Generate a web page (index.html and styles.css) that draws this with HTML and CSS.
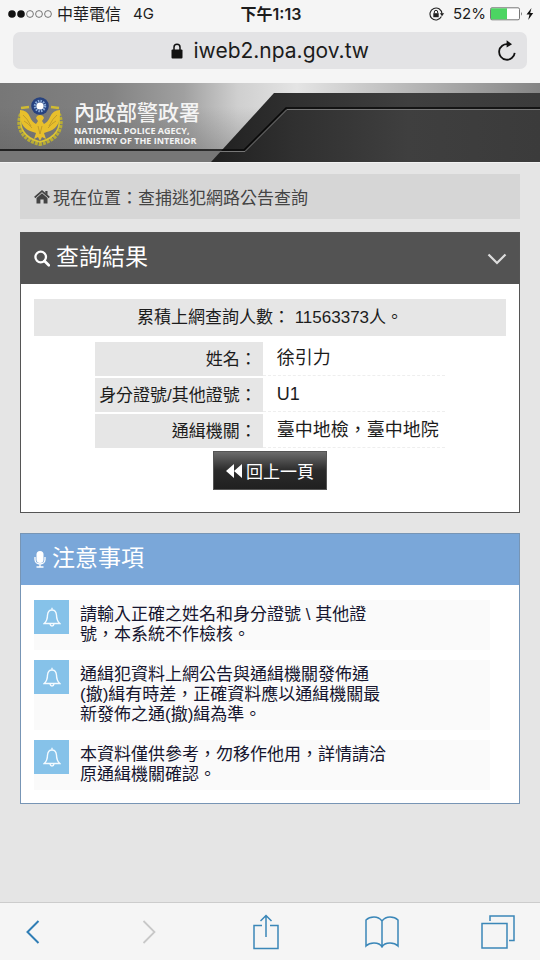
FILE: index.html
```html
<!DOCTYPE html>
<html lang="zh-Hant">
<head>
<meta charset="utf-8">
<meta name="viewport" content="width=device-width, initial-scale=1">
<title>查捕逃犯網路公告查詢</title>
<link rel="stylesheet" href="styles.css">
</head>
<body>
<div class="status">
  <div class="status-left">
    <svg width="45" height="10" viewBox="0 0 45 10" aria-hidden="true">
      <circle cx="4" cy="5" r="3.8" fill="#111"/><circle cx="13" cy="5" r="3.8" fill="#111"/>
      <g fill="none" stroke="#555" stroke-width=".8"><circle cx="22" cy="5" r="3.4"/><circle cx="31" cy="5" r="3.4"/><circle cx="40" cy="5" r="3.4"/></g>
    </svg>
    <span>中華電信</span>
    <span class="network">4G</span>
  </div>
  <div class="time">下午1:13</div>
  <div class="status-right">
    <svg width="16" height="14" viewBox="0 0 16 14" aria-hidden="true">
      <path d="M12.4 9.6A6 6 0 1 1 13 7" fill="none" stroke="#222" stroke-width="1.1"/>
      <path d="M10.8 6.3h4.4L13 9.2z" fill="#222"/>
      <rect x="4.3" y="6.2" width="5.4" height="4" fill="#222"/>
      <path d="M5.3 6.3V5a1.7 1.7 0 0 1 3.4 0v1.3" fill="none" stroke="#222"/>
    </svg>
    <span class="percent">52%</span>
    <svg width="44" height="14" viewBox="0 0 44 14" aria-hidden="true">
      <rect x=".5" y=".8" width="29" height="12" rx="1.5" fill="#fff" stroke="#777"/>
      <rect x="1" y="1.3" width="16" height="11" fill="#4cd562"/>
      <path d="M31 4.8q1.6 2 0 4z" fill="#555"/>
      <path d="M41.5 1 36.5 7.6h3L38.2 13l5-7h-3z" fill="#111"/>
    </svg>
  </div>
</div>
<div class="address-row">
  <div class="address">
    <label class="address-main" for="url">
      <svg width="12" height="16" viewBox="0 0 12 16" aria-label="安全連線">
        <rect x=".5" y="6.5" width="11" height="9" rx="1" fill="#111"/>
        <path d="M3 7V4.2a3 3 0 0 1 6 0V7" fill="none" stroke="#111" stroke-width="1.5"/>
      </svg>
      <input id="url" class="url" type="text" value="iweb2.npa.gov.tw">
    </label>
    <button class="reload" type="button" aria-label="重新載入">
      <svg width="20" height="22" viewBox="0 0 20 22">
        <path d="M11 4.2a7.8 7.8 0 1 0 6.7 8.6" fill="none" stroke="#111" stroke-width="1.8"/>
        <path d="M9.6.3 15 4.2 9.6 7.6z" fill="#111"/>
      </svg>
    </button>
  </div>
</div>

<header class="banner">
  <svg class="banner-art" viewBox="0 0 540 79" preserveAspectRatio="xMinYMin slice" aria-hidden="true">
    <defs>
      <linearGradient id="silver" x1="0" x2="1">
        <stop offset="0" stop-color="#777"/><stop offset=".2" stop-color="#828282"/>
        <stop offset=".34" stop-color="#a0a0a0"/><stop offset=".44" stop-color="#cfcfcf"/>
        <stop offset=".55" stop-color="#e4e4e4"/><stop offset="1" stop-color="#858585"/>
      </linearGradient>
      <linearGradient id="coal" x1="0" x2="1">
        <stop offset="0" stop-color="#202020"/><stop offset=".25" stop-color="#303030"/><stop offset=".6" stop-color="#3f3f3f"/><stop offset="1" stop-color="#3b3b3b"/>
      </linearGradient>
      <linearGradient id="shade" x1="0" x2="0" y1="0" y2="1">
        <stop offset=".3" stop-color="#555" stop-opacity="0"/><stop offset="1" stop-color="#555" stop-opacity=".4"/>
      </linearGradient>
    </defs>
    <path d="M0 0h540v79H0z" fill="url(#silver)"/>
    <path d="M0 0h270v79H0z" fill="url(#shade)"/>
    <path d="M0 69h221l-9 10H0z" fill="#777"/>
    <path d="M211 79 274 10H540v69z" fill="url(#coal)"/>
    <path d="M0 68.5H245L287 26.500H540" fill="none" stroke="#777"/>
    <path d="M0 67H244L286 25H540" fill="none" stroke="#080808" stroke-width="1.5"/>
  </svg>
  <svg class="emblem" width="48" height="52" viewBox="0 0 48 52" role="img" aria-label="警徽">
    <path d="M5 17C0 30 6 43 24 47C42 43 48 30 43 17" fill="none" stroke="#b9ad35" stroke-width="4" stroke-dasharray="3 1"/>
    <path d="M6 18C2 30 8 41 24 45C40 41 46 30 42 18" fill="none" stroke="#dcc433" stroke-width="1.500"/>
    <path d="M5 11l8-1M43 11l-8-1" stroke="#d0bb33" stroke-width="2.500"/>
    <path d="M4 13Q11 13 14 20Q16 25 20 27L22 24 20 21Q21 18 24 18T28 21L26 24 28 27Q32 25 34 20Q37 13 44 13Q45 30 34 34L28 36 30 42 26 40 24 44 22 40 18 42 20 36 14 34Q3 30 4 13z" fill="#e8bf2c"/>
    <path d="M7 18q4 3 8 11M8 24q4 2 8 7M41 18q-4 3-8 11M40 24q-4 2-8 7M22 29l2 8 2-8" fill="none" stroke="#b8932a" stroke-width=".8"/>
    <circle cx="24" cy="9" r="8.800" fill="#27427f"/>
    <circle cx="24" cy="9" r="5" fill="none" stroke="#8cadd8" stroke-width="2.500" stroke-dasharray="1.500 1.100"/>
    <circle cx="24" cy="9" r="3.600" fill="#fff"/>
  </svg>
  <div class="agency">
    <div class="agency-name">內政部警政署</div>
    <div class="agency-en"><div>NATIONAL POLICE AGECY,</div><div>MINISTRY OF THE INTERIOR</div></div>
  </div>
</header>

<main class="page">
  <nav class="crumbs">
    <svg width="16" height="14" viewBox="0 0 16 14" aria-hidden="true">
      <path d="M8 3.200 13.500 8v5.500H9.600V9.500H6.400v4H2.500V8z" fill="#444"/>
      <path d="M.7 7.500 8 1.200l7.300 6.300" fill="none" stroke="#444" stroke-width="1.700"/>
      <path d="M11.300 1h2.200v4l-2.200-2z" fill="#444"/>
    </svg>
    <span>現在位置：查捕逃犯網路公告查詢</span>
  </nav>

  <section class="panel">
    <h2 class="panel-title">
      <svg width="16" height="17" viewBox="0 0 16 17" aria-hidden="true"><circle cx="6.700" cy="7" r="5.300" fill="none" stroke="#fff" stroke-width="2.300"/><path d="M10.500 11l4.300 4.300" stroke="#fff" stroke-width="2.700" stroke-linecap="round"/></svg>
      <span>查詢結果</span>
      <button class="toggle" type="button" aria-label="收合">
        <svg width="20" height="12" viewBox="0 0 20 12"><path d="M1.500 1.500 10 10l8.500-8.500" fill="none" stroke="#ddd" stroke-width="2.200"/></svg>
      </button>
    </h2>
    <div class="result">
      <p class="count">累積上網查詢人數： 11563373人。</p>
      <table class="record">
        <tr><th scope="row">姓名：</th><td>徐引力</td></tr>
        <tr><th scope="row">身分證號/其他證號：</th><td>U1</td></tr>
        <tr><th scope="row">通緝機關：</th><td>臺中地檢，臺中地院</td></tr>
      </table>
      <button class="back" type="button">
        <svg width="16" height="14" viewBox="0 0 16 14" aria-hidden="true"><path d="M8 0v14L0 7zM16 0v14L8 7z" fill="#fff"/></svg>
        <span>回上一頁</span>
      </button>
    </div>
  </section>

  <section class="panel notice">
    <h2 class="panel-title">
      <svg width="12" height="17" viewBox="0 0 12 17" aria-hidden="true"><rect x="2.500" y="0" width="7" height="12" rx="3.500" fill="#fff"/><path d="M1 6v2.500a5 4.500 0 0 0 10 0V6M6 13v3M2.500 16h7" fill="none" stroke="#fff" stroke-width="1.300"/></svg>
      <span>注意事項</span>
    </h2>
    <ul class="notes">
      <li>
        <span class="bell"><svg width="18" height="20" viewBox="0 0 18 20" aria-hidden="true"><path d="M1.200 16.500Q4.500 13.500 4.500 8 5 3 9 3t4.500 5q0 5.500 3.300 8.500zM9 3V.8M7 17q.3 2 2 2t2-2" fill="none" stroke="#f3faff" stroke-width="1.400"/></svg></span>
        <p>請輸入正確之姓名和身分證號 \ 其他證號，本系統不作檢核。</p>
      </li>
      <li>
        <span class="bell"><svg width="18" height="20" viewBox="0 0 18 20" aria-hidden="true"><path d="M1.200 16.500Q4.500 13.500 4.500 8 5 3 9 3t4.500 5q0 5.500 3.300 8.500zM9 3V.8M7 17q.3 2 2 2t2-2" fill="none" stroke="#f3faff" stroke-width="1.400"/></svg></span>
        <p>通緝犯資料上網公告與通緝機關發佈通(撤)緝有時差，正確資料應以通緝機關最新發佈之通(撤)緝為準。</p>
      </li>
      <li>
        <span class="bell"><svg width="18" height="20" viewBox="0 0 18 20" aria-hidden="true"><path d="M1.200 16.500Q4.500 13.500 4.500 8 5 3 9 3t4.500 5q0 5.500 3.300 8.500zM9 3V.8M7 17q.3 2 2 2t2-2" fill="none" stroke="#f3faff" stroke-width="1.400"/></svg></span>
        <p>本資料僅供參考，勿移作他用，詳情請洽原通緝機關確認。</p>
      </li>
    </ul>
  </section>
</main>

<footer class="toolbar">
  <button type="button" aria-label="上一頁"><svg width="14" height="24" viewBox="0 0 14 24"><path d="M12.500 1 1.500 12l11 11" fill="none" stroke="#2f7db5" stroke-width="2"/></svg></button>
  <button type="button" aria-label="下一頁" disabled><svg width="14" height="24" viewBox="0 0 14 24"><path d="M1.500 1l11 11-11 11" fill="none" stroke="#c8c8c8" stroke-width="1.800"/></svg></button>
  <button type="button" aria-label="分享"><svg width="26" height="36" viewBox="0 0 26 36"><path d="M9 11.500H1v23h24v-23h-8M13 23V1.500M7.500 7 13 1.500 18.500 7" fill="none" stroke="#3b87b8" stroke-width="1.500"/></svg></button>
  <button type="button" aria-label="書籤"><svg width="34" height="32" viewBox="0 0 34 32"><path d="M17 5Q14 1 9 1T1 4v26q3-3 8-3 6 0 8 4 2-4 8-4 5 0 8 3V4q-3-3-8-3t-8 4v26" fill="none" stroke="#3b87b8" stroke-width="1.500"/></svg></button>
  <button type="button" aria-label="分頁"><svg width="34" height="34" viewBox="0 0 34 34"><path d="M1 8.500h25v24.500H1zM9 6V1h24v24.500h-5" fill="none" stroke="#3b87b8" stroke-width="1.500"/></svg></button>
</footer>
</body>
</html>
```
FILE: styles.css
```css
* { box-sizing: border-box; }

body {
  margin: 0;
  min-height: 100vh;
  display: flex;
  flex-direction: column;
  background: #f5f5f5;
  color: #1c1c1c;
  font-family: "Liberation Sans", "Noto Sans CJK TC", sans-serif;
  font-size: 17px;
}

button {
  border: 0;
  padding: 0;
  background: none;
  font: inherit;
  color: inherit;
}

svg { display: block; flex: none; }
p, h2, ul { margin: 0; padding: 0; }

.status {
  display: grid;
  grid-template-columns: 1fr auto 1fr;
  align-items: center;
  height: 28px;
  padding: 0 6px 0 8px;
  font-family: Inter, "Noto Sans CJK TC", sans-serif;
  font-size: 16px;
  line-height: 28px;
}

.status-left, .status-right {
  display: flex;
  align-items: center;
  gap: 4px;
}

.status-right { justify-content: flex-end; }
.network { margin-left: 8px; font-size: 15px; }
.percent { margin-left: 4px; font-size: 15px; }
.time { font-weight: 600; }

.address-row { padding: 4px 13px 14px; }

.address {
  display: grid;
  grid-template-columns: 1fr auto 1fr;
  align-items: center;
  height: 37px;
  border-radius: 7px;
  background: #e3e3e5;
}

.address-main {
  grid-column: 2;
  display: flex;
  align-items: center;
  gap: 11px;
}

.url {
  width: 176px;
  padding: 0;
  border: 0;
  background: none;
  font-family: Inter, sans-serif;
  font-size: 21px;
  line-height: 28px;
  color: #1c1c1c;
}

.reload {
  justify-self: end;
  margin-right: 10px;
}

.banner {
  position: relative;
  display: flex;
  align-items: center;
  gap: 10px;
  height: 79px;
  padding: 0 16px;
  overflow: hidden;
}

.banner-art {
  position: absolute;
  inset: 0;
  width: 100%;
  height: 100%;
}

.emblem, .agency { position: relative; }
.agency { color: #f4f4f4; }

.agency-name {
  font-size: 21px;
  font-weight: 500;
  line-height: 26px;
}

.agency-en {
  font-family: "Open Sans", sans-serif;
  font-size: 9px;
  font-weight: 700;
  line-height: 10px;
}

.page {
  flex: 1;
  display: flex;
  flex-direction: column;
  padding: 11px 20px 20px;
  background: #e5e5e5;
  border-top: 1px solid #f2f2f2;
}

.crumbs {
  display: flex;
  align-items: center;
  gap: 3px;
  height: 45px;
  margin-bottom: 13px;
  padding: 0 14px;
  background: #d6d6d6;
  color: #444;
}

.panel {
  margin-bottom: 20px;
  border: 1px solid #555;
  background: #fff;
}

.panel-title {
  display: flex;
  align-items: center;
  gap: 6px;
  height: 51px;
  padding: 0 12px 4px 13px;
  background: #535353;
  color: #fff;
  font-size: 23px;
  font-weight: 400;
  line-height: 34px;
}

.panel-title svg { margin-top: 4px; }
.toggle { margin-left: auto; }

.result {
  display: flex;
  flex-direction: column;
  align-items: center;
  padding: 15px 13px 22px;
}

.count {
  align-self: stretch;
  background: #e6e6e6;
  text-align: center;
  line-height: 37px;
}

.record {
  margin: 4px 0 1px;
  border-spacing: 0 2px;
}

.record th, .record td {
  height: 34px;
  line-height: 33px;
}

.record th {
  padding: 0 6px 0 4px;
  background: #e6e6e6;
  font-weight: 400;
  text-align: right;
}

.record td {
  padding: 0 6px 0 14px;
  border-bottom: 1px dashed #eee;
  font-size: 18px;
}

.back {
  display: flex;
  align-items: center;
  gap: 4px;
  height: 39px;
  padding: 0 12px;
  border: 1px solid #555;
  background: linear-gradient(#6b6b6b, #2b2b2b 50%, #202020);
  color: #fff;
}

.notice { border-color: #7795b5; }

.notice .panel-title {
  background: #7aa7d9;
}

.notes {
  display: flex;
  flex-direction: column;
  gap: 10px;
  padding: 15px 29px 13px 13px;
  list-style: none;
}

.notes li {
  display: flex;
  align-items: flex-start;
  gap: 11px;
  background: #fafafa;
  color: #15152e;
}

.notes p {
  max-width: 308px;
  padding: 5px 0;
  line-height: 20px;
}

.bell {
  display: flex;
  flex: none;
  align-items: center;
  justify-content: center;
  width: 35px;
  height: 34px;
  background: #86c2e9;
}

.toolbar {
  display: flex;
  align-items: center;
  justify-content: space-between;
  height: 58px;
  padding: 0 22px 0 13px;
  border-top: 1px solid #ccc;
}

.toolbar button {
  display: flex;
  align-items: center;
  justify-content: center;
  width: 40px;
  height: 40px;
}
```
